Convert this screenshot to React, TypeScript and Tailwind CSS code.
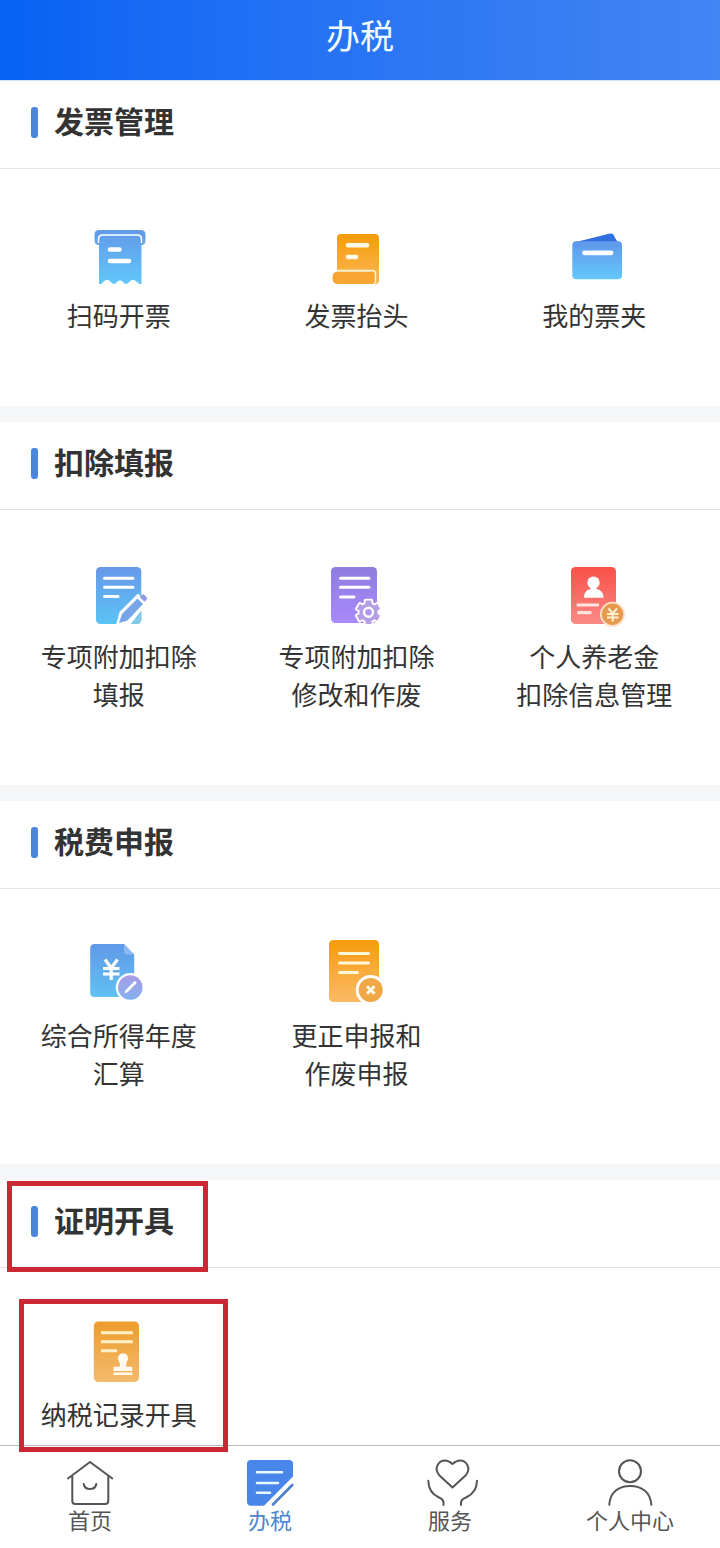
import type { ReactNode } from 'react';

function Gradient({ id, from, to }: { id: string; from: string; to: string }) {
  return (
    <defs>
      <linearGradient id={id} x1="0" y1="0" x2="0" y2="1">
        <stop offset="0" stopColor={from} />
        <stop offset="1" stopColor={to} />
      </linearGradient>
    </defs>
  );
}

function ItemSvg({ children, viewBox = '0 0 80 78' }: { children: ReactNode; viewBox?: string }) {
  return (
    <svg width="80" height="78" viewBox={viewBox} fill="none" className="block shrink-0">
      {children}
    </svg>
  );
}

const ScanIcon = () => (
  <ItemSvg>
    <Gradient id="scan" from="#6299e9" to="#60c7fb" />
    <path d="M20 12H62Q66.500 12 66.500 16.500V22Q66.500 27 62.500 27V66H60.500L56 62.500Q54 61 52 62.500L48.500 65.500L46 66L43.500 63.500Q41 61.500 38.500 63.500L36 66L33.500 65.500L30 62.500Q28 61 26 62.500L22 66H20V27Q15.500 27 15.500 22V16.500Q15.500 12 20 12Z" fill="url(#scan)" />
    <path d="M19.500 25V21.500Q19.500 17 24 17H58Q62.500 17 62.500 21.500V25" stroke="#fff" strokeWidth="1.500" />
    <path d="M31 31.500H40.500M31 43H50" stroke="#fff" strokeWidth="4.600" strokeLinecap="round" />
  </ItemSvg>
);

const InvoiceTitleIcon = () => (
  <ItemSvg>
    <Gradient id="title" from="#f69c0b" to="#fbb754" />
    <path d="M25 16H59Q63 16 63 20V62Q63 66 58.500 66H32L21 54V20Q21 16 25 16Z" fill="url(#title)" />
    <rect x="15" y="52" width="45" height="17" fill="#fff" />
    <path d="M55 52H63V62Q63 66 59 66Z" fill="#fbb24a" />
    <path d="M22 53.500H56Q59 53.500 59 56.500V62.500Q59 66 55.500 66H22Q16.500 66 16.500 59.700T22 53.500Z" fill="#f8a632" />
    <path d="M20 52.500H56Q59.500 52.500 59.500 56V65" stroke="#fff4d5" strokeWidth="1.500" />
    <path d="M32 27.300H51M32 39H40" stroke="#fffbe9" strokeWidth="4.500" strokeLinecap="round" />
  </ItemSvg>
);

const WalletIcon = () => (
  <ItemSvg>
    <Gradient id="wallet" from="#5f96ea" to="#64c8fb" />
    <path d="M22 24L55 15.800Q59.500 14.700 60.500 19L64 24.500Z" fill="#2f6fe0" />
    <rect x="18.300" y="23.300" width="49.700" height="38" rx="4" fill="url(#wallet)" />
    <path d="M30.500 34.800H57" stroke="#fff" strokeWidth="4.800" strokeLinecap="round" />
  </ItemSvg>
);

const FormPencilIcon = () => (
  <ItemSvg>
    <Gradient id="form" from="#6798e9" to="#5bc4f5" />
    <rect x="17" y="8" width="45.300" height="57" rx="4.500" fill="url(#form)" />
    <path d="M25.500 19.300H54M25.500 28.300H54M25.500 37.500H39" stroke="#fff" strokeWidth="3" strokeLinecap="round" />
    <path d="M37 66L40.500 53L59 34.500L69 43.500L51 66Z" fill="#fff" />
    <path d="M40 64L43 55L58.500 39.500L64 45L48.500 61.500Z" fill="#76a4e8" />
    <path d="M60.500 38L63 35.700Q64.300 34.800 65.500 36L67.500 38.200Q68.500 39.500 67.500 40.700L65.500 42.800Z" fill="#8c9edf" />
    <path d="M52 65L62.300 54V60.500Q62.300 65 58 65Z" fill="#85cbe5" />
  </ItemSvg>
);

const teeth = [0, 60, 120, 180, 240, 300];

const FormGearIcon = () => (
  <ItemSvg viewBox="-0.5 0 80 78">
    <Gradient id="gearform" from="#8e7ce0" to="#a98afb" />
    <rect x="14.500" y="8" width="46" height="56" rx="4.500" fill="url(#gearform)" />
    <path d="M24 19.300H52.500M24 28.300H52.500M24 38H37.500" stroke="#fff" strokeWidth="3" strokeLinecap="round" />
    <g fill="#fff" stroke="#fff" strokeWidth="3.600" strokeLinejoin="round">
      <circle cx="52" cy="53.300" r="9" />
      {teeth.map((a) => (
        <rect key={a} x="49" y="41.500" width="6" height="6" transform={`rotate(${a} 52 53.3)`} />
      ))}
    </g>
    <g fill="#b69ee6">
      <circle cx="52" cy="53.300" r="9" />
      {teeth.map((a) => (
        <rect key={a} x="49" y="41.500" width="6" height="6" rx="1" transform={`rotate(${a} 52 53.3)`} />
      ))}
    </g>
    <circle cx="52" cy="53.300" r="4.500" fill="#b395ee" stroke="#fff" strokeWidth="2.400" />
  </ItemSvg>
);

const PensionIcon = () => (
  <ItemSvg>
    <Gradient id="pension" from="#f85048" to="#fb8a86" />
    <rect x="17" y="8" width="45" height="57" rx="4.500" fill="url(#pension)" />
    <circle cx="39.500" cy="23.700" r="6.200" fill="#fff" />
    <path d="M36.500 27H42.500V30Q49.500 31.500 49.700 38.700H29.800Q30 31.500 36.500 30Z" fill="#fff" />
    <path d="M22.700 46H45M23.300 53.600H37.500" stroke="#ffe3df" strokeWidth="3.200" />
    <circle cx="58.500" cy="55.300" r="12.500" fill="#ffe2ca" />
    <circle cx="58.500" cy="55.300" r="10.700" fill="#e79a4d" />
    <path d="M54.500 49.500L58.700 54.500L63 49.500M58.700 54.500V62.500M53 55H64.500M53 58.500H64.500" stroke="#fff3cf" strokeWidth="2" />
  </ItemSvg>
);

const SettlementIcon = () => (
  <ItemSvg>
    <Gradient id="settle" from="#6199e8" to="#60c1f3" />
    <path d="M15.500 6H45L55.200 16.500V54.500Q55.200 59 51 59H15.500Q11.200 59 11.200 54.500V10.500Q11.200 6 15.500 6Z" fill="url(#settle)" />
    <path d="M45 6L55.200 16.500H48Q45 16.500 45 13.500Z" fill="#8eb8f0" />
    <path d="M26 21.500L32.200 30L38.500 21.500M32.200 30V42M24 30.500H40.500M24 36H40.500" stroke="#fff" strokeWidth="3.200" />
    <circle cx="51.300" cy="49.500" r="14.500" fill="#fff" />
    <Gradient id="settleBadge" from="#a99be5" to="#82b1ee" />
    <circle cx="51.300" cy="49.500" r="12.200" fill="url(#settleBadge)" />
    <path d="M47.500 53.300L54.200 46.500" stroke="#fff" strokeWidth="3" />
    <path d="M55 45.600L56 44.600" stroke="#fff" strokeWidth="3" strokeLinecap="round" />
    <path d="M45.300 55.300L46.400 52.200L48.500 54.300Z" fill="#fff" />
  </ItemSvg>
);

const CorrectionIcon = () => (
  <ItemSvg viewBox="-0.5 0 80 78">
    <Gradient id="correct" from="#f79b0c" to="#fcba67" />
    <rect x="12.500" y="2" width="50" height="62" rx="4.500" fill="url(#correct)" />
    <path d="M23 15.500H52M23 25H52M23 34.600H41" stroke="#fff8d8" strokeWidth="3" strokeLinecap="round" />
    <circle cx="54.200" cy="52" r="15" fill="#fff" />
    <circle cx="54.200" cy="52" r="12" fill="#f0a847" />
    <path d="M50.500 48.300L58 55.700M58 48.300L50.500 55.700" stroke="#fffbe6" strokeWidth="3" />
  </ItemSvg>
);

const RecordIcon = () => (
  <ItemSvg>
    <Gradient id="record" from="#ee9c2c" to="#f3ba6d" />
    <rect x="14.800" y="4.400" width="45.200" height="60.600" rx="4.500" fill="url(#record)" />
    <path d="M22 15.700H53.700M22 24.700H53.700M22 33.700H38" stroke="#fff2c8" strokeWidth="3" />
    <path d="M44 36.300A5 5 0 0 1 48 44.500Q46.500 46.500 47.300 49.700H53.300V54H34.500V49.700H40.700Q41.500 46.500 40 44.500A5 5 0 0 1 44 36.300ZM34.500 55.500H53.300V58H34.500Z" fill="#fffaf0" />
  </ItemSvg>
);

type Item = { lines: string[]; icon: ReactNode };

function Section({ title, items, size }: { title: string; items: Item[]; size: string }) {
  return (
    <section className={`shrink-0 bg-white ${size}`}>
      <div className="flex h-[88px] items-start border-b border-[#e4e4e6] pt-[26px] pl-[31px]">
        <span className="h-[31px] w-[7px] rounded-[3px] bg-[#4b85dc]" />
        <h2 className="ml-4 text-[30px] leading-[27px] font-bold text-[#333]">{title}</h2>
      </div>
      <div className="grid grid-cols-3 pt-[49px] pr-[7px]">
        {items.map((item) => (
          <div key={item.lines.join('')} className="flex flex-col items-center text-[26px] leading-[38px] text-[#333]">
            {item.icon}
            {item.lines.map((line) => (
              <span key={line} className="whitespace-nowrap">{line}</span>
            ))}
          </div>
        ))}
      </div>
    </section>
  );
}

function NavSvg({ children }: { children: ReactNode }) {
  return (
    <svg width="60" height="52" viewBox="0 0 60 52" fill="none" stroke="#555" strokeWidth="2" strokeLinecap="round" strokeLinejoin="round" className="block shrink-0">
      {children}
    </svg>
  );
}

const tabs = [
  {
    label: '首页',
    color: 'text-[#555]',
    icon: (
      <NavSvg>
        <path d="M8 23.500L30 7L52.300 23.500M12.300 21V46Q12.300 49 15.300 49H45.300Q48.300 49 48.300 46V21M23.700 29Q24.500 34 30 34T36.300 29" />
      </NavSvg>
    ),
  },
  {
    label: '办税',
    color: 'text-[#4a87cf]',
    icon: (
      <NavSvg>
        <path d="M11 5H49Q53 5 53 9V21.500L24 50.700H11Q7 50.700 7 46.700V9Q7 5 11 5Z" fill="#4986ea" stroke="none" />
        <path d="M17 17.300H42M17 28H38M17 37.700H30" stroke="#e9faff" strokeWidth="2.600" />
        <path d="M52.300 30L33 49.500" stroke="#4d7fce" strokeWidth="2.600" />
      </NavSvg>
    ),
  },
  {
    label: '服务',
    color: 'text-[#555]',
    icon: (
      <NavSvg>
        <path d="M32.500 32.500L19.500 20.500C13 13 19 5.500 25 5.500Q28.500 5.500 32.500 9Q36.500 5.500 40 5.500C46 5.500 52 13 45.500 20.500Z" />
        <path d="M8.300 25.700C8.500 36 13.500 40 19 42.500Q24.500 44.500 23.500 50M57 25.700C56.800 36 51.500 40 46 42.500Q40 44.500 41 50" />
      </NavSvg>
    ),
  },
  {
    label: '个人中心',
    color: 'text-[#555]',
    icon: (
      <NavSvg>
        <circle cx="30" cy="16.300" r="11" />
        <path d="M9.300 49.800C10 37 19 31 30.200 31S50.500 37 51.300 49.800" />
      </NavSvg>
    ),
  },
];

export default function App() {
  return (
    <div className="relative flex h-[1548px] w-[720px] flex-col overflow-hidden bg-[#f5f6f8] font-['Noto_Sans_CJK_SC',sans-serif]">
      <header className="flex h-[81px] shrink-0 items-center justify-center border-b border-[#cfe3fc] bg-linear-to-r from-[#0562f4] to-[#4285f3] pb-[11px] text-[34px] leading-none text-[#f3ffff]">
        <h1>办税</h1>
      </header>
      <main className="flex min-h-0 flex-1 flex-col gap-4 overflow-hidden">
        <Section
          title="发票管理"
          size="h-[325px]"
          items={[
            { lines: ['扫码开票'], icon: <ScanIcon /> },
            { lines: ['发票抬头'], icon: <InvoiceTitleIcon /> },
            { lines: ['我的票夹'], icon: <WalletIcon /> },
          ]}
        />
        <Section
          title="扣除填报"
          size="h-[363px]"
          items={[
            { lines: ['专项附加扣除', '填报'], icon: <FormPencilIcon /> },
            { lines: ['专项附加扣除', '修改和作废'], icon: <FormGearIcon /> },
            { lines: ['个人养老金', '扣除信息管理'], icon: <PensionIcon /> },
          ]}
        />
        <Section
          title="税费申报"
          size="h-[363px]"
          items={[
            { lines: ['综合所得年度', '汇算'], icon: <SettlementIcon /> },
            { lines: ['更正申报和', '作废申报'], icon: <CorrectionIcon /> },
          ]}
        />
        <Section title="证明开具" size="h-[270px]" items={[{ lines: ['纳税记录开具'], icon: <RecordIcon /> }]} />
      </main>
      <nav className="grid h-[103px] shrink-0 grid-cols-4 border-t border-[#b8b8b8] bg-white pt-[9px]">
        {tabs.map((tab) => (
          <div key={tab.label} className={`flex flex-col items-center text-[22px] leading-6 ${tab.color}`}>
            {tab.icon}
            <span>{tab.label}</span>
          </div>
        ))}
      </nav>
      <div className="absolute top-[1181px] left-[7px] h-[91px] w-[201px] border-5 border-[#cb2834]" />
      <div className="absolute top-[1299px] left-[19px] h-[153px] w-[209px] border-5 border-[#cb2834]" />
    </div>
  );
}
